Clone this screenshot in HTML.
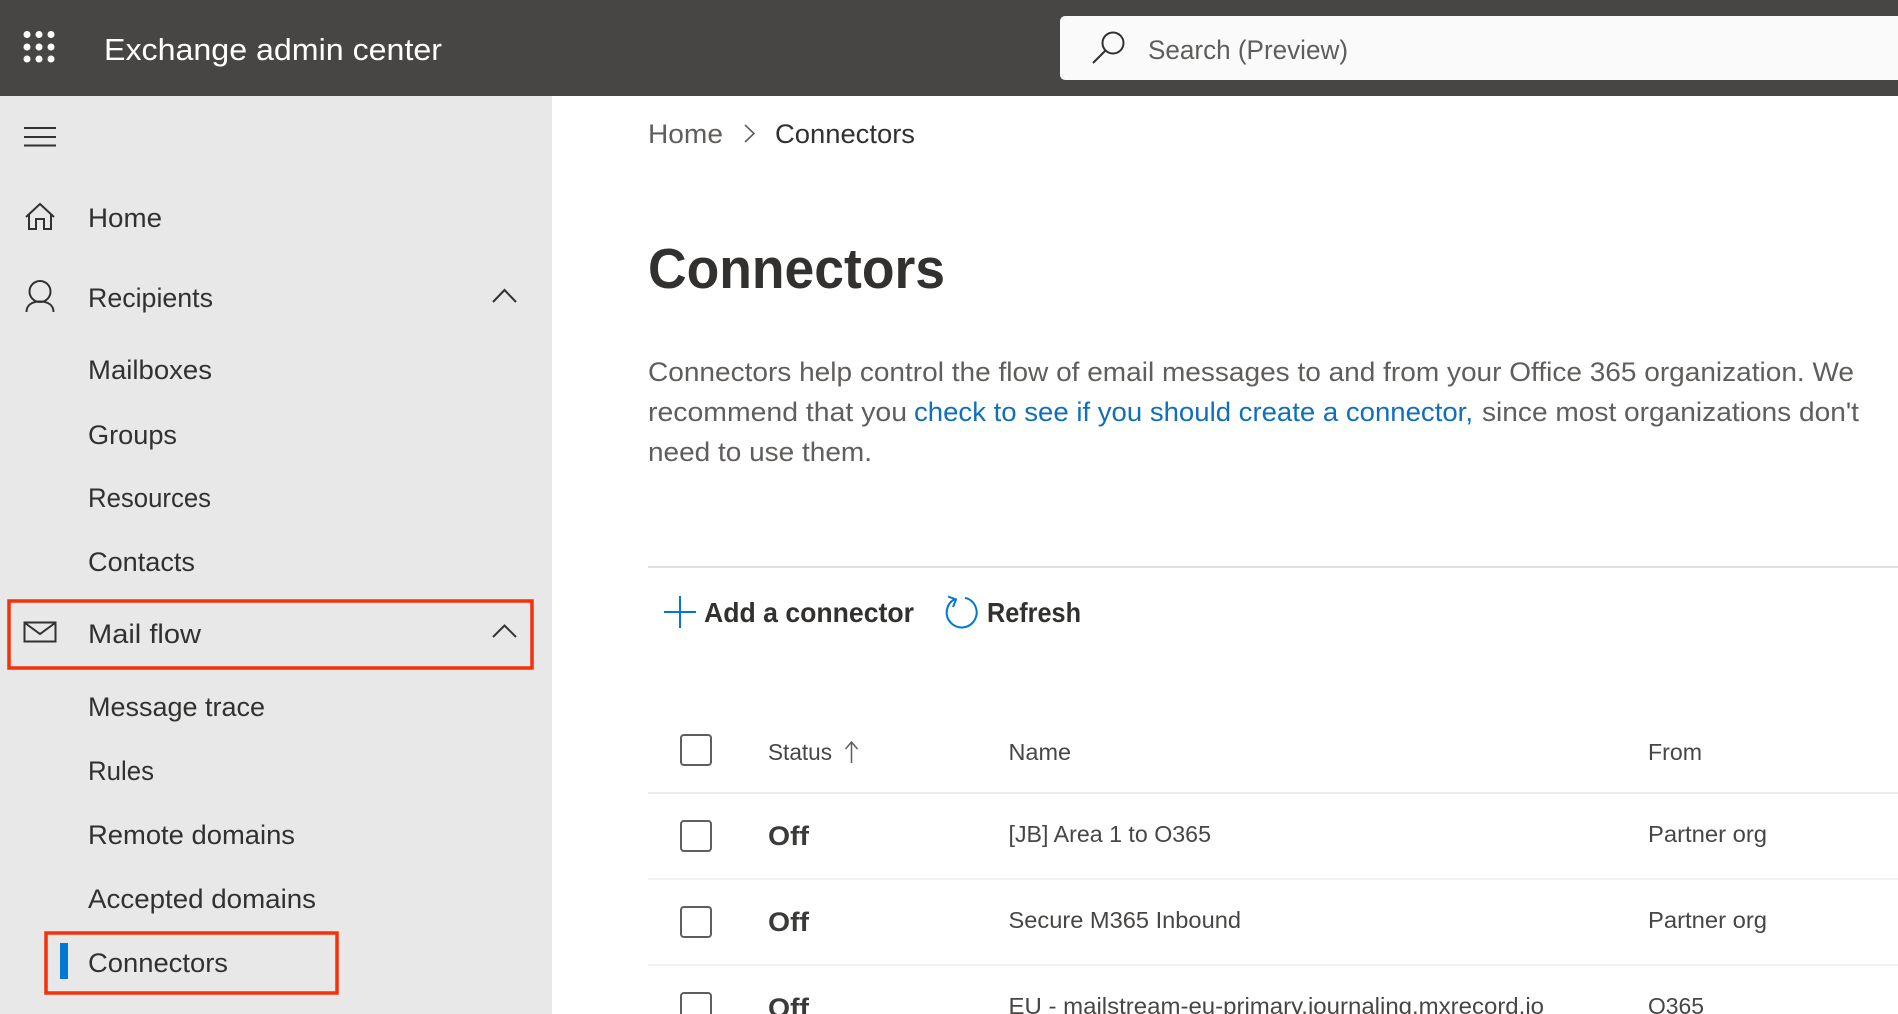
<!DOCTYPE html>
<html><head><meta charset="utf-8"><title>Exchange admin center</title>
<style>
html,body{margin:0;padding:0;background:#fff;width:1898px;height:1014px;overflow:hidden}
svg{display:block}
text{font-family:"Liberation Sans",sans-serif}
.n{font-size:27px;fill:#323130}
.p{font-size:27px;fill:#605e5c}
.t{font-size:23.5px;fill:#484644}
.o{font-size:27px;font-weight:bold;fill:#3b3a39}
.b{font-size:28px;fill:#323130;font-weight:bold}
.i{fill:none;stroke:#323130;stroke-width:2}
.c{fill:none;stroke:#605e5c;stroke-width:2}
</style></head><body>
<svg xmlns="http://www.w3.org/2000/svg" width="1898" height="1014" viewBox="0 0 1898 1014">
<rect width="1898" height="1014" fill="#fff"/>
<rect width="1898" height="96" fill="#484644"/>
<rect y="96" width="552" height="918" fill="#e8e8e8"/>
<g fill="#fff">
<circle cx="27" cy="34.500" r="3.500"/><circle cx="39" cy="34.500" r="3.500"/><circle cx="51" cy="34.500" r="3.500"/>
<circle cx="27" cy="47" r="3.500"/><circle cx="39" cy="47" r="3.500"/><circle cx="51" cy="47" r="3.500"/>
<circle cx="27" cy="59" r="3.500"/><circle cx="39" cy="59" r="3.500"/><circle cx="51" cy="59" r="3.500"/>
</g>
<text x="104" y="60" font-size="31" fill="#fff" textLength="338" lengthAdjust="spacingAndGlyphs">Exchange admin center</text>
<rect x="1060" y="16" width="900" height="64" rx="5" fill="#fafafa"/>
<circle cx="1113" cy="43" r="10.500" class="i"/>
<path d="M1105.500 50.500L1093 63" class="i"/>
<text x="1148" y="59" font-size="27" fill="#605e5c" textLength="200" lengthAdjust="spacingAndGlyphs">Search (Preview)</text>

<path d="M24 128H56M24 137H56M24 145.500H56" class="i"/>
<path d="M26 217L40 204L54 217M29 214V229H36V219H44V229H51V214" class="i"/>
<circle cx="40" cy="291.500" r="10.500" class="i"/>
<path d="M26.500 312C26.500 305 32 301.500 40 301.500C48 301.500 53.500 305 53.500 312" class="i"/>
<rect x="24.500" y="622.500" width="31" height="19" class="i"/>
<path d="M25 623L40 634L55 623" class="i"/>
<path d="M493 302L504.500 290L516 302" class="i"/>
<path d="M493 637L504.500 625.500L516 637" class="i"/>

<text class="n" x="88" y="227" textLength="74" lengthAdjust="spacingAndGlyphs">Home</text>
<text class="n" x="88" y="307" textLength="125" lengthAdjust="spacingAndGlyphs">Recipients</text>
<text class="n" x="88" y="379" textLength="124" lengthAdjust="spacingAndGlyphs">Mailboxes</text>
<text class="n" x="88" y="444" textLength="89" lengthAdjust="spacingAndGlyphs">Groups</text>
<text class="n" x="88" y="507" textLength="123" lengthAdjust="spacingAndGlyphs">Resources</text>
<text class="n" x="88" y="571" textLength="107" lengthAdjust="spacingAndGlyphs">Contacts</text>
<text class="n" x="88" y="643" textLength="113" lengthAdjust="spacingAndGlyphs">Mail flow</text>
<text class="n" x="88" y="716" textLength="177" lengthAdjust="spacingAndGlyphs">Message trace</text>
<text class="n" x="88" y="780" textLength="66" lengthAdjust="spacingAndGlyphs">Rules</text>
<text class="n" x="88" y="844" textLength="207" lengthAdjust="spacingAndGlyphs">Remote domains</text>
<text class="n" x="88" y="908" textLength="228" lengthAdjust="spacingAndGlyphs">Accepted domains</text>
<text class="n" x="88" y="972" textLength="140" lengthAdjust="spacingAndGlyphs">Connectors</text>
<rect x="60" y="943" width="8" height="36" fill="#0078d4"/>
<rect x="9" y="601" width="523" height="67" fill="none" stroke="#f5310c" stroke-width="3.500"/>
<rect x="46" y="933" width="291" height="60" fill="none" stroke="#f5310c" stroke-width="3.500"/>

<text x="648" y="143" font-size="27" fill="#605e5c" textLength="75" lengthAdjust="spacingAndGlyphs">Home</text>
<path d="M745 125L754 133.500L745 142" fill="none" stroke="#605e5c" stroke-width="1.600"/>
<text x="775" y="143" font-size="27" fill="#323130" textLength="140" lengthAdjust="spacingAndGlyphs">Connectors</text>
<text x="648" y="288" font-size="57" font-weight="bold" fill="#323130" textLength="297" lengthAdjust="spacingAndGlyphs">Connectors</text>

<text class="p" x="648" y="381" textLength="1206" lengthAdjust="spacingAndGlyphs">Connectors help control the flow of email messages to and from your Office 365 organization. We</text>
<text class="p" x="648" y="421" textLength="259" lengthAdjust="spacingAndGlyphs">recommend that you</text>
<text x="914" y="421" font-size="27" fill="#106ebe" textLength="559" lengthAdjust="spacingAndGlyphs">check to see if you should create a connector,</text>
<text class="p" x="1482" y="421" textLength="377" lengthAdjust="spacingAndGlyphs">since most organizations don't</text>
<text class="p" x="648" y="461" textLength="224" lengthAdjust="spacingAndGlyphs">need to use them.</text>
<rect x="648" y="566" width="1250" height="2" fill="#e1dfdd"/>

<path d="M664 612H696M680 596V628" fill="none" stroke="#0078d4" stroke-width="2"/>
<text class="b" x="704" y="622" font-weight="bold" textLength="210" lengthAdjust="spacingAndGlyphs">Add a connector</text>
<path d="M955 599A15 15 0 1 0 965 597.800" fill="none" stroke="#0078d4" stroke-width="2"/>
<path d="M948 596.500L956 599.500L953 607" fill="none" stroke="#0078d4" stroke-width="2"/>
<text class="b" x="987" y="622" textLength="94" lengthAdjust="spacingAndGlyphs">Refresh</text>

<rect x="681" y="735" width="30" height="30" rx="3" class="c"/>
<text class="t" x="768" y="760" textLength="64" lengthAdjust="spacingAndGlyphs">Status</text>
<path d="M851.500 763V742M845.500 749L851.500 742L857.500 749" fill="none" stroke="#605e5c" stroke-width="1.500"/>
<text class="t" x="1008.500" y="760" textLength="62.500" lengthAdjust="spacingAndGlyphs">Name</text>
<text class="t" x="1648" y="760" textLength="54" lengthAdjust="spacingAndGlyphs">From</text>
<rect x="648" y="792" width="1250" height="2" fill="#edebe9"/>

<rect x="681" y="821" width="30" height="30" rx="3" class="c"/>
<text class="o" x="768" y="845" textLength="41" lengthAdjust="spacingAndGlyphs">Off</text>
<text class="t" x="1008.500" y="842" textLength="202.500" lengthAdjust="spacingAndGlyphs">[JB] Area 1 to O365</text>
<text class="t" x="1648" y="842" textLength="119" lengthAdjust="spacingAndGlyphs">Partner org</text>
<rect x="648" y="878" width="1250" height="2" fill="#f3f2f1"/>

<rect x="681" y="907" width="30" height="30" rx="3" class="c"/>
<text class="o" x="768" y="931" textLength="41" lengthAdjust="spacingAndGlyphs">Off</text>
<text class="t" x="1008.500" y="928" textLength="232.500" lengthAdjust="spacingAndGlyphs">Secure M365 Inbound</text>
<text class="t" x="1648" y="928" textLength="119" lengthAdjust="spacingAndGlyphs">Partner org</text>
<rect x="648" y="964" width="1250" height="2" fill="#f3f2f1"/>

<rect x="681" y="993" width="30" height="30" rx="3" class="c"/>
<text class="o" x="768" y="1017" textLength="41" lengthAdjust="spacingAndGlyphs">Off</text>
<text class="t" x="1008.500" y="1014" textLength="535.500" lengthAdjust="spacingAndGlyphs">EU - mailstream-eu-primary.journaling.mxrecord.io</text>
<text class="t" x="1648" y="1014" textLength="56" lengthAdjust="spacingAndGlyphs">O365</text>
</svg>
</body></html>
